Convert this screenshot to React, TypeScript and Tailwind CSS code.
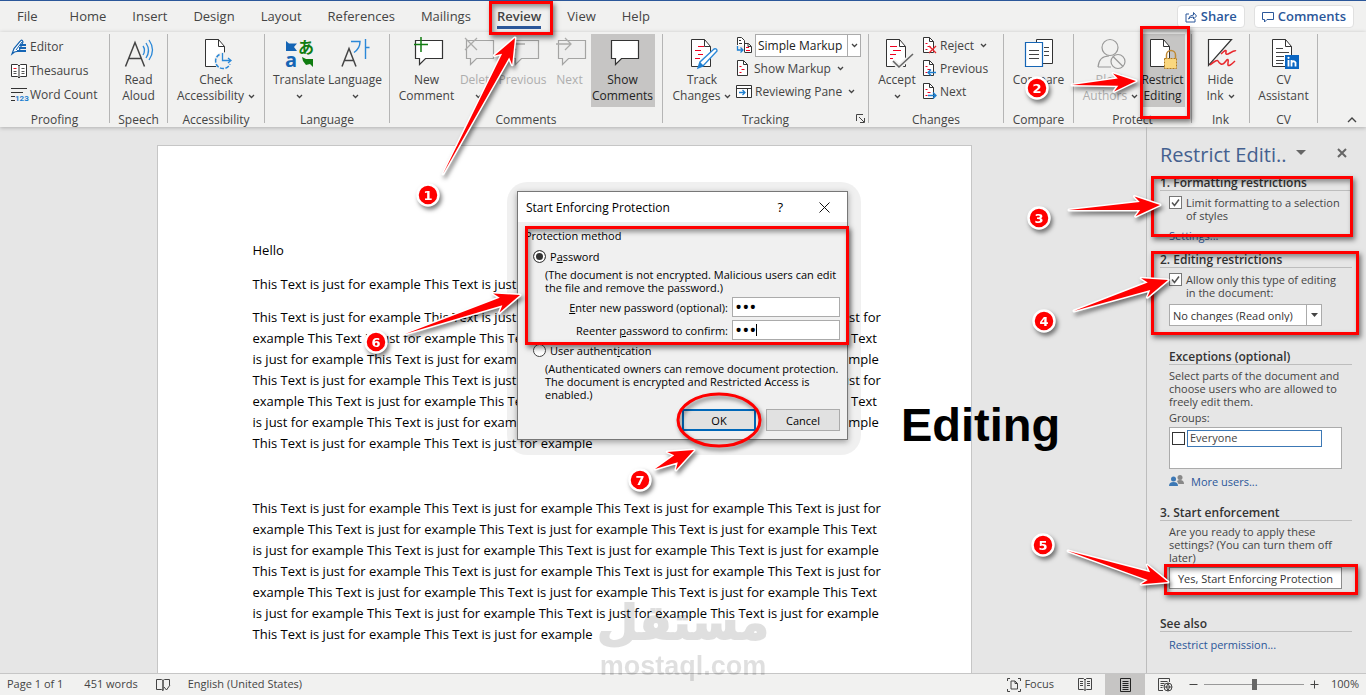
import { useId } from 'react';
import type { ReactNode } from 'react';

const sentence = 'This Text is just for example ';

const tabs = ['File', 'Home', 'Insert', 'Design', 'Layout', 'References', 'Mailings', 'Review', 'View', 'Help'];

/* ---------- Icons ---------- */

function Icon({ w, h, className = '', children }: { w: number; h: number; className?: string; children: ReactNode }) {
  return (
    <svg
      width={w}
      height={h}
      viewBox={`0 0 ${w} ${h}`}
      fill="none"
      stroke="#444444"
      className={`shrink-0 overflow-visible ${className}`}
      aria-hidden="true"
    >
      {children}
    </svg>
  );
}

function Chevron({ className = '' }: { className?: string }) {
  return (
    <Icon w={7} h={5} className={className}>
      <path d="M1 1l2.5 2.5L6 1" strokeWidth="1.3" />
    </Icon>
  );
}

function EditorIcon() {
  return (
    <Icon w={16} h={16}>
      <path d="M1 15L3 9.500L9 2.500Q11-.5 12 3L8 12L3.500 13z" fill="#fff" stroke="#0f5fae" strokeWidth="1.200" />
      <path d="M5 11L11 3" stroke="#0f5fae" />
      <path d="M9 6h6M8 9h7M6 12h9" stroke="#1565b5" strokeWidth="2" />
    </Icon>
  );
}

function ThesaurusIcon() {
  return (
    <Icon w={16} h={16}>
      <path d="M.5 1.500h6L8 3l1.500-1.500h6v12h-6L8 15l-1.500-1.500h-6z" fill="#fff" stroke="#333" />
      <path d="M8 3v12" stroke="#333" />
      <path d="M2.500 5.500h3" stroke="#e81123" />
      <path d="M2.500 8.500h3M2.500 10.500h3M10.500 5.500h3M10.500 8.500h3M10.500 10.500h3" stroke="#555" />
    </Icon>
  );
}

function WordCountIcon() {
  return (
    <Icon w={16} h={16}>
      <path d="M0 1.500h16M0 5.500h12M0 9.500h4M0 13.500h4" stroke="#333" />
      <text x="4" y="14" fontSize="8" fontWeight="700" fill="#1e7fd0" stroke="none" className="font-['Roboto',sans-serif]">
        123
      </text>
    </Icon>
  );
}

function ReadAloudIcon() {
  return (
    <Icon w={30} h={30}>
      <path d="M1.500 27.500L11 3.500L20.500 27.500M5 19.500h12" strokeWidth="1.500" />
      <path d="M19 7q3 4 0 9M22 4q5 7.500 0 15M25 1q7 10 0 20" stroke="#2b88d8" strokeWidth="1.300" />
    </Icon>
  );
}

function Page() {
  return (
    <>
      <path d="M1.500.500h13l6 7v20h-19z" fill="#fff" stroke="#333" />
      <path d="M14.500.500v7h6" stroke="#333" />
    </>
  );
}

function AccessibilityIcon() {
  return (
    <Icon w={24} h={32}>
      <Page />
      <circle cx="19" cy="22" r="9" fill="#f1f1f0" stroke="none" />
      <path d="M15.500 15.500A7.500 7.500 0 1 0 26 25" stroke="#2b88d8" strokeWidth="1.500" strokeDasharray="4 1.500" />
      <path d="M18.500 14v7.500h8M24 19l3 2.500L24 24" stroke="#2b88d8" strokeWidth="1.300" />
    </Icon>
  );
}

function TranslateIcon() {
  return (
    <Icon w={30} h={30}>
      <path d="M2 2l3 2.500h8L10 8l3 4H2z" fill="#1565b5" stroke="none" />
      <path d="M18 18l4 2h7v8l-3-3-4 1-3-4z" fill="#107c10" stroke="none" />
      <text x="1" y="28" fontSize="20" fontWeight="700" fill="#1565b5" stroke="none" className="font-['Open_Sans',sans-serif]">
        a
      </text>
      <text x="14" y="14" fontSize="16" fontWeight="700" fill="#107c10" stroke="none" className="font-['Noto_Sans_CJK_JP',sans-serif]">
        あ
      </text>
    </Icon>
  );
}

function LanguageIcon() {
  return (
    <Icon w={30} h={30}>
      <path d="M2 27.500L9 9.500L16 27.500M4.500 21.500h9" strokeWidth="1.500" />
      <path d="M11 2.500h9q0 7-6 11M25.500 0v20M25.500 8.500h4" stroke="#2b88d8" strokeWidth="1.400" />
    </Icon>
  );
}

function Bubble({ kind }: { kind: 'new' | 'delete' | 'previous' | 'next' | 'show' }) {
  const faded = kind === 'delete' || kind === 'previous' || kind === 'next';
  return (
    <Icon w={34} h={30} className={faded ? 'opacity-40' : ''}>
      <path
        d="M5.500 1.500h27v18h-17l-6 6v-6h-4z"
        fill={faded ? '#ececec' : '#fff'}
        stroke="#333"
        strokeWidth="1.200"
      />
      {kind === 'new' && <path d="M11-2v15M4 5.500h14" stroke="#107c10" strokeWidth="1.500" />}
      {kind === 'delete' && <path d="M4-1l12 12M16-1L4 11" strokeWidth="1.300" />}
      {kind === 'previous' && <path d="M4 5h15M10-1L4 5l6 6" strokeWidth="1.300" />}
      {kind === 'next' && <path d="M3 5h15M12-1l6 6-6 6" strokeWidth="1.300" />}
    </Icon>
  );
}

function TrackIcon() {
  return (
    <Icon w={24} h={32}>
      <Page />
      <path d="M8 7.500h6M5 11.500h6M8 15.500h5M5 19.500h5" stroke="#f00020" />
      <path d="M8 29l2-6L24 10q3-1 3 2L13 27z" fill="#fff" stroke="#2b88d8" strokeWidth="1.400" />
      <path d="M8 29l2-6 4 4z" fill="#1e7fd0" stroke="none" />
    </Icon>
  );
}

function AcceptIcon() {
  return (
    <Icon w={24} h={32}>
      <Page />
      <path d="M5 7.500h7M8 11.500h8M5 15.500h6M5 19.500h3" stroke="#f00020" />
      <path d="M8 22l6 6L28 15" stroke="#f1f1f0" strokeWidth="5" />
      <path d="M8 22l6 6L28 15" stroke="#666" strokeWidth="1.600" />
    </Icon>
  );
}

function SmallPage({ kind }: { kind: 'reject' | 'previous' | 'next' | 'markup' }) {
  return (
    <Icon w={15} h={17}>
      <path d="M1.500.5h6l4 4v11h-10z" fill="#fff" stroke="#333" />
      <path d="M7.500.5v4h4" stroke="#333" />
      <path d="M3.500 6.500h2M5.500 9.500h3M3.500 12.500h2" stroke="#f00020" />
      {kind === 'reject' && <path d="M7 9l7 7M14 9l-7 7" stroke="#e8272c" strokeWidth="1.300" />}
      {kind === 'previous' && <path d="M6 12.500h8M9 9.500l-3 3 3 3" stroke="#1e7fd0" strokeWidth="1.400" />}
      {kind === 'next' && <path d="M6 12.500h8M11 9.500l3 3-3 3" stroke="#1e7fd0" strokeWidth="1.400" />}
    </Icon>
  );
}

function MarkupModeIcon() {
  return (
    <Icon w={17} h={17}>
      <path d="M1.500 8V.5h4l3 3V9M8.500 15V6.500h4l3 3v6h-7M12 6.500v3h3" fill="#fff" stroke="#333" />
      <path d="M3 3.500h2M3 6.500h3" stroke="#333" />
      <path d="M10 10.500h3M10 13.500h4" stroke="#f00020" />
      <path d="M1.500 9v4H7M4.500 10.500L7 13l-2.500 2.500" stroke="#1e7fd0" strokeWidth="1.300" />
    </Icon>
  );
}

function PaneIcon() {
  return (
    <Icon w={16} h={15}>
      <path d="M.5 1.500h15v12H.5zM.5 4.500h15M11.500 4.500v9" fill="#fff" stroke="#333" />
      <path d="M3 8.500h6M6.500 6l2.500 2.500L6.500 11" stroke="#1e7fd0" strokeWidth="1.300" />
    </Icon>
  );
}

function CompareIcon() {
  return (
    <Icon w={30} h={30}>
      <path d="M12.500.500h16v24h-16z" fill="#fff" stroke="#333" />
      <path d="M20 8.500h5M20 12.500h5M20 16.500h5" />
      <path d="M1.500 3.500h17v24h-17z" fill="#fff" stroke="#1565b5" strokeWidth="1.200" />
      <path d="M5 11.500h10M5 15.500h10M5 19.500h10" />
    </Icon>
  );
}

function BlockAuthorsIcon() {
  return (
    <Icon w={30} h={32} className="opacity-50">
      <circle cx="14" cy="8.500" r="8" strokeWidth="1.200" />
      <path d="M2 28Q3 17 13 17M2 28h13" strokeWidth="1.200" />
      <circle cx="22" cy="22.500" r="7" strokeWidth="1.200" />
      <path d="M17 17.500l10 10" strokeWidth="1.200" />
    </Icon>
  );
}

function RestrictIcon() {
  return (
    <Icon w={28} h={32}>
      <Page />
      <path d="M17.500 20v-4a4.500 4.500 0 0 1 9 0v4" stroke="#c08a34" strokeWidth="1.500" />
      <rect x="15.500" y="19.500" width="12" height="10" fill="#fbd77e" stroke="#b47c1e" strokeDasharray="2 1" />
    </Icon>
  );
}

function InkIcon() {
  return (
    <Icon w={28} h={32}>
      <path d="M1.500.500h23l-23 26z" fill="#fff" stroke="#333" strokeWidth="1.200" />
      <path d="M14 15q6-6 5-2t4 1 6-2M3 26q7-6 8-4t3 3 5-3 2 2 7-2" stroke="#e8272c" strokeWidth="1.500" />
    </Icon>
  );
}

function CvIcon() {
  return (
    <Icon w={26} h={32}>
      <Page />
      <path d="M5 9.500h7M5 13.500h13M5 17.500h8M5 21.500h8M5 24.500h7" />
      <rect x="14" y="16" width="14" height="14" fill="#0a66c2" stroke="none" />
      <path d="M17.500 21v6.500M20.500 21v6.500M20.500 23.500q2-2.500 4 0v4" stroke="#fff" strokeWidth="1.800" />
      <circle cx="17.500" cy="18.800" r="1.100" fill="#fff" stroke="none" />
    </Icon>
  );
}

/* ---------- Ribbon ---------- */

type BigButtonProps = {
  icon: ReactNode;
  top: string;
  bottom?: string;
  arrow?: boolean;
  disabled?: boolean;
  pressed?: boolean;
  width: string;
};

function BigButton({ icon, top, bottom, arrow, disabled, pressed, width }: BigButtonProps) {
  return (
    <button
      type="button"
      disabled={disabled}
      className={`flex h-[73px] shrink-0 flex-col items-center pt-[5px] leading-4 whitespace-nowrap ${width} ${
        pressed ? 'bg-[#c6c5c4] text-[#222]' : disabled ? 'text-[#adadad]' : ''
      }`}
    >
      <span className="flex h-[33px] items-start">{icon}</span>
      <span>{top}</span>
      <span className="flex h-4 items-center gap-1">
        {bottom}
        {arrow && <Chevron />}
      </span>
    </button>
  );
}

function SmallButton({ icon, arrow, children }: { icon: ReactNode; arrow?: boolean; children: ReactNode }) {
  return (
    <button type="button" className="flex h-[23px] items-center gap-[3px] whitespace-nowrap">
      {icon}
      {children}
      {arrow && <Chevron className="ml-[3px]" />}
    </button>
  );
}

function Group({ name, width, children, corner }: { name: string; width: string; children: ReactNode; corner?: ReactNode }) {
  return (
    <section aria-label={name} className={`relative flex h-[89px] shrink-0 flex-col border-r border-[#b5b5b5] ${width}`}>
      <div className="flex h-[73px] justify-center">{children}</div>
      <p className="pt-1 text-center leading-[18px]">{name}</p>
      {corner}
    </section>
  );
}

function Ribbon() {
  return (
    <div className="relative z-10 flex bg-[#f1f1f0] pt-[2px] pb-1 text-[12px] text-[#444] shadow-[0_1px_4px_#b0b0b0]">
      <Group name="Proofing" width="w-[110px]">
        <div className="flex w-full flex-col pt-px pl-[11px]">
          <button type="button" className="flex h-6 items-center gap-[3px]"><EditorIcon />Editor</button>
          <button type="button" className="flex h-6 items-center gap-[3px]"><ThesaurusIcon />Thesaurus</button>
          <button type="button" className="flex h-6 items-center gap-[3px] whitespace-nowrap"><WordCountIcon />Word Count</button>
        </div>
      </Group>
      <Group name="Speech" width="w-[58px]">
        <BigButton icon={<ReadAloudIcon />} top="Read" bottom="Aloud" width="w-[50px]" />
      </Group>
      <Group name="Accessibility" width="w-[97px]">
        <BigButton icon={<AccessibilityIcon />} top="Check" bottom="Accessibility" arrow width="w-[90px]" />
      </Group>
      <Group name="Language" width="w-[125px]">
        <BigButton icon={<TranslateIcon />} top="Translate" arrow width="w-[56px]" />
        <BigButton icon={<LanguageIcon />} top="Language" arrow width="w-[56px]" />
      </Group>
      <Group name="Comments" width="w-[273px]">
        <div className="flex pr-1">
          <BigButton icon={<Bubble kind="new" />} top="New" bottom="Comment" width="w-[66px]" />
          <BigButton icon={<Bubble kind="delete" />} top="Delete" arrow disabled width="w-[37px]" />
          <BigButton icon={<Bubble kind="previous" />} top="Previous" disabled width="w-[52px]" />
          <BigButton icon={<Bubble kind="next" />} top="Next" disabled width="w-[42px]" />
          <BigButton icon={<Bubble kind="show" />} top="Show" bottom="Comments" pressed width="w-[64px]" />
        </div>
      </Group>
      <Group
        name="Tracking"
        width="w-[206px]"
        corner={
          <Icon w={9} h={9} className="absolute right-[3px] bottom-0">
            <path d="M.5 7V.5H7M3 3l5 5M8.500 4v4.500H4" />
          </Icon>
        }
      >
        <BigButton icon={<TrackIcon />} top="Track" bottom="Changes" arrow width="w-[64px]" />
        <div className="ml-[2px] flex flex-col">
          <div className="flex h-[23px] items-center gap-[2px]">
            <MarkupModeIcon />
            <div className="relative flex">
              <select aria-label="Display for review" className="h-[23px] w-[106px] appearance-none border border-[#ababab] bg-white pl-[2px] text-[#222]">
                <option>Simple Markup</option>
              </select>
              <span className="pointer-events-none absolute inset-y-0 right-0 flex w-[14px] items-center justify-center border-l border-[#ababab]">
                <Chevron />
              </span>
            </div>
          </div>
          <SmallButton icon={<SmallPage kind="markup" />} arrow>Show Markup</SmallButton>
          <SmallButton icon={<PaneIcon />} arrow>Reviewing Pane</SmallButton>
        </div>
      </Group>
      <Group name="Changes" width="w-[135px]">
        <div className="flex pr-1">
          <BigButton icon={<AcceptIcon />} top="Accept" arrow width="w-[50px]" />
          <div className="flex w-[74px] flex-col">
            <SmallButton icon={<SmallPage kind="reject" />} arrow>Reject</SmallButton>
            <SmallButton icon={<SmallPage kind="previous" />}>Previous</SmallButton>
            <SmallButton icon={<SmallPage kind="next" />}>Next</SmallButton>
          </div>
        </div>
      </Group>
      <Group name="Compare" width="w-[70px]">
        <BigButton icon={<CompareIcon />} top="Compare" width="w-[60px]" />
      </Group>
      <Group name="Protect" width="w-[118px]">
        <BigButton icon={<BlockAuthorsIcon />} top="Block" bottom="Authors" arrow disabled width="w-[60px]" />
        <BigButton icon={<RestrictIcon />} top="Restrict" bottom="Editing" pressed width="w-[44px]" />
      </Group>
      <Group name="Ink" width="w-[58px]">
        <BigButton icon={<InkIcon />} top="Hide" bottom="Ink" arrow width="w-[50px]" />
      </Group>
      <Group name="CV" width="w-[68px]">
        <BigButton icon={<CvIcon />} top="CV" bottom="Assistant" width="w-[60px]" />
      </Group>
      <button type="button" aria-label="Collapse the ribbon" className="mt-auto mr-[9px] mb-0 ml-auto">
        <Icon w={10} h={7}>
          <path d="M1 6l4-4 4 4" strokeWidth="1.400" />
        </Icon>
      </button>
    </div>
  );
}

function TabBar() {
  return (
    <header className="flex h-8 shrink-0 items-center border-t border-[#2b579a] bg-[#f1f1f0] pl-[17px] text-[13px] text-[#444]">
      <nav className="flex gap-[26px] self-start pt-[5px]">
        {tabs.map((tab) => (
          <a
            key={tab}
            href={`#${tab.toLowerCase()}`}
            className={`leading-5 first:mr-[6px] ${tab === 'Review' ? 'border-b-3 border-[#2b579a] font-semibold' : ''}`}
          >
            {tab}
          </a>
        ))}
      </nav>
      <div className="mr-3 ml-auto flex gap-[9px] text-[13px] font-semibold text-[#2b579a]">
        <button type="button" className="flex h-[23px] items-center gap-1 rounded-sm border border-[#e0e0e0] bg-white px-[7px]">
          <Icon w={12} h={12}>
            <path d="M4 3H1v8h9V8M3.500 8q1-4 5-4V1.500L11.500 5 8.500 8V6Q5 6 3.500 8z" stroke="#2b579a" />
          </Icon>
          Share
        </button>
        <button type="button" className="flex h-[23px] items-center gap-1 rounded-sm border border-[#e0e0e0] bg-white px-[7px]">
          <Icon w={12} h={12}>
            <path d="M.5 1.500h11v7H5l-2.500 2.500V8.500h-2z" stroke="#2b579a" />
          </Icon>
          Comments
        </button>
      </div>
    </header>
  );
}

/* ---------- Document ---------- */

function Document() {
  return (
    <main className="relative min-w-0 flex-1 overflow-hidden pt-[18px] pr-[18px]">
      <article className="mx-auto h-full w-[815px] border border-b-0 border-[#c6c6c6] bg-white pt-[94px] pr-[82px] pl-[95px] text-[13px] leading-[21px] text-black">
        <p>Hello</p>
        <p className="mt-[13px]">{sentence.repeat(3)}</p>
        <p className="mt-3">{sentence.repeat(24)}</p>
        <p className="mt-11">{sentence.repeat(24)}</p>
      </article>
    </main>
  );
}

/* ---------- Restrict Editing pane ---------- */

function Tick({ label }: { label: string }) {
  const id = useId();
  return (
    <div className="flex gap-1 pr-[7px] pl-[9px]">
      <span className="relative h-[13px] w-[13px] shrink-0">
        <input id={id} type="checkbox" defaultChecked className="block h-[13px] w-[13px] appearance-none border border-[#777] bg-white" />
        <svg viewBox="0 0 13 13" fill="none" stroke="#555" strokeWidth="1.500" className="pointer-events-none absolute inset-0" aria-hidden="true">
          <path d="M3 6.500l2.500 3L10 3.500" />
        </svg>
      </span>
      <label htmlFor={id}>{label}</label>
    </div>
  );
}

function PaneHeading({ children }: { children: ReactNode }) {
  return <h3 className="border-b border-[#bdbdbd] text-[12px] leading-[14px] font-semibold text-[#333]">{children}</h3>;
}

function RestrictPane() {
  return (
    <aside className="w-[220px] shrink-0 border-l border-[#bdbdbd] pt-[14px] pr-[14px] pl-[13px] text-[11px] leading-[13px] text-[#444]">
      <div className="flex items-center text-[#44608f]">
        <h2 className="text-[20px] leading-[27px] whitespace-nowrap">Restrict Editi..</h2>
        <Icon w={10} h={6} className="mb-1 ml-[10px]">
          <path d="M0 0h10L5 5z" fill="#666" stroke="none" />
        </Icon>
        <button type="button" aria-label="Close pane" className="mr-[5px] mb-1 ml-auto">
          <Icon w={10} h={10}>
            <path d="M1 1l8 8M9 1L1 9" stroke="#666" strokeWidth="2" />
          </Icon>
        </button>
      </div>

      <div className="mt-2">
        <PaneHeading>1. Formatting restrictions</PaneHeading>
      </div>
      <div className="mt-[5px]">
        <Tick label="Limit formatting to a selection of styles" />
      </div>
      <a href="#settings" className="mt-[7px] ml-[9px] block text-[#2b579a]">Settings...</a>

      <div className="mt-[11px]">
        <PaneHeading>2. Editing restrictions</PaneHeading>
      </div>
      <div className="mt-[5px]">
        <Tick label="Allow only this type of editing in the document:" />
      </div>
      <div className="relative mt-[5px] ml-[9px] w-[153px]">
        <select aria-label="Editing type" className="block h-[22px] w-full appearance-none border border-[#ababab] bg-white pl-[3px] text-[#333]">
          <option>No changes (Read only)</option>
        </select>
        <span className="pointer-events-none absolute inset-y-0 right-0 flex w-4 items-center justify-center border-l border-[#ababab]">
          <Icon w={7} h={4}>
            <path d="M0 0h7L3.500 4z" fill="#444" stroke="none" />
          </Icon>
        </span>
      </div>

      <div className="mt-6 ml-[9px]">
        <PaneHeading>Exceptions (optional)</PaneHeading>
        <p className="mt-1">Select parts of the document and choose users who are allowed to freely edit them.</p>
        <p className="mt-[3px]">Groups:</p>
        <div className="mt-[3px] mr-[10px] flex h-[42px] items-start gap-[2px] border border-[#ababab] bg-white pt-[2px] pl-[2px]">
          <input id="everyone" type="checkbox" className="mt-[2px] h-[13px] w-[13px] appearance-none border border-[#333] bg-white" />
          <label htmlFor="everyone" className="h-[17px] w-[135px] border border-[#3c78b5] pl-[2px] leading-[14px]">Everyone</label>
        </div>
        <a href="#users" className="mt-[5px] flex items-center gap-[7px] text-[#2b579a]">
          <Icon w={15} h={14}>
            <circle cx="4.500" cy="5" r="2.500" fill="#3c78b5" stroke="none" />
            <path d="M0 12q0-4 4.500-4T9 12z" fill="#3c78b5" stroke="none" />
            <circle cx="11" cy="3.500" r="2.500" fill="#888" stroke="none" />
            <path d="M8 7q1-1 3-1 4 0 4 4H9.500z" fill="#888" stroke="none" />
          </Icon>
          More users...
        </a>
      </div>

      <div className="mt-[18px]">
        <PaneHeading>3. Start enforcement</PaneHeading>
      </div>
      <p className="mt-1 ml-[9px]">Are you ready to apply these settings? (You can turn them off later)</p>
      <button type="button" className="mt-[3px] ml-[9px] block h-[22px] w-[173px] border border-[#8c8c8c] bg-white text-[#333]">
        Yes, Start Enforcing Protection
      </button>

      <div className="mt-7">
        <PaneHeading>See also</PaneHeading>
      </div>
      <a href="#permission" className="mt-[6px] ml-[9px] block text-[#2b579a]">Restrict permission...</a>
    </aside>
  );
}

/* ---------- Dialog ---------- */

function ProtectionDialog() {
  return (
    <div className="absolute top-[182px] left-[507px] z-20 w-[354px] rounded-[20px] bg-black/6 pt-[9px] pr-[13px] pb-[15px] pl-[10px]">
      <div role="dialog" aria-label="Start Enforcing Protection" className="border border-[#777] bg-[#f0f0f0] text-[11px] leading-[13px] text-black shadow-[0_2px_6px_rgba(0,0,0,0.35)]">
        <div className="flex h-[30px] items-center bg-white pr-[17px] pl-2 text-[12px]">
          <h2>Start Enforcing Protection</h2>
          <button type="button" aria-label="Help" className="ml-auto text-[13px]">?</button>
          <button type="button" aria-label="Close" className="ml-9">
            <Icon w={11} h={11}>
              <path d="M.5.5l10 10M10.500.5l-10 10" stroke="#111" />
            </Icon>
          </button>
        </div>
        <div className="px-[7px] pt-[7px] pb-2">
          <fieldset>
            <legend>Protection method</legend>
            <div className="mt-2 flex items-center gap-1 pl-2">
              <input id="by-password" type="radio" name="method" defaultChecked className="h-[13px] w-[13px] appearance-none rounded-full border border-[#444] bg-white checked:bg-[#333] checked:shadow-[inset_0_0_0_2px_white]" />
              <label htmlFor="by-password">P<u>a</u>ssword</label>
            </div>
            <p className="mt-[5px] pl-5">(The document is not encrypted. Malicious users can edit the file and remove the password.)</p>
            <div className="mt-[3px] flex items-center justify-end gap-1">
              <label htmlFor="new-password"><u>E</u>nter new password (optional):</label>
              <input id="new-password" type="password" defaultValue="abc" className="h-5 w-[108px] border border-[#ababab] bg-white px-[2px] text-[19px]" />
            </div>
            <div className="relative mt-[3px] flex items-center justify-end gap-1">
              <label htmlFor="confirm-password">Reenter <u>p</u>assword to confirm:</label>
              <input id="confirm-password" type="password" defaultValue="abc" className="h-5 w-[108px] border border-[#ababab] bg-white px-[2px] text-[19px]" />
              <span className="absolute top-1 right-[83px] h-3 w-px bg-black"></span>
            </div>
            <div className="mt-1 flex items-center gap-1 pl-2">
              <input id="by-user" type="radio" name="method" className="h-[13px] w-[13px] appearance-none rounded-full border border-[#444] bg-white" />
              <label htmlFor="by-user">User authent<u>i</u>cation</label>
            </div>
            <p className="mt-[5px] pl-5">
              (Authenticated owners can remove document protection. The document is encrypted and Restricted Access is enabled.)
            </p>
          </fieldset>
          <div className="mt-2 flex justify-end gap-[10px]">
            <button type="button" className="h-[22px] w-[74px] border-2 border-[#0067b8] bg-[#e1e1e1]">OK</button>
            <button type="button" className="h-[22px] w-[74px] border border-[#ababab] bg-[#e1e1e1]">Cancel</button>
          </div>
        </div>
      </div>
    </div>
  );
}

/* ---------- Callouts drawn over the window ---------- */

type Arrow = { from: [number, number]; to: [number, number]; head?: number };

const arrows: Arrow[] = [
  { from: [443, 174], to: [515, 38] },
  { from: [1072, 85], to: [1136, 81], head: 9 },
  { from: [1069, 210], to: [1160, 205] },
  { from: [1074, 311], to: [1168, 280] },
  { from: [1068, 551], to: [1168, 582] },
  { from: [405, 334], to: [520, 295] },
  { from: [655, 469], to: [694, 450] },
];

const badges: [number, number][] = [
  [428, 195],
  [1037, 88],
  [1039, 218],
  [1044, 321],
  [1043, 545],
  [376, 342],
  [640, 480],
];

function arrowPoints({ from, to, head = 10 }: Arrow) {
  const dx = to[0] - from[0];
  const dy = to[1] - from[1];
  const length = Math.hypot(dx, dy);
  const ux = dx / length;
  const uy = dy / length;
  // back = distance behind the tip, side = distance off the shaft
  const at = (back: number, side: number) => `${to[0] - ux * back - uy * side},${to[1] - uy * back + ux * side}`;
  return [
    `${from[0]},${from[1]}`,
    at(head * 2, head * 0.4),
    at(head * 2.5, head),
    at(0, 0),
    at(head * 2.5, -head),
    at(head * 2, -head * 0.4),
  ].join(' ');
}

const frame = 'absolute border-[#f00] shadow-[2px_3px_5px_rgba(0,0,0,0.5),inset_2px_3px_5px_rgba(0,0,0,0.4)]';

function Callouts() {
  return (
    <div className="pointer-events-none absolute inset-0 z-30">
      <div className={`${frame} top-[1px] left-[489px] h-[34px] w-[64px] border-3`}></div>
      <div className={`${frame} top-[26px] left-[1140px] h-[93px] w-[50px] border-3`}></div>
      <div className={`${frame} top-[176px] left-[1151px] h-[61px] w-[202px] border-3`}></div>
      <div className={`${frame} top-[251px] left-[1151px] h-[84px] w-[208px] border-3`}></div>
      <div className={`${frame} top-[564px] left-[1164px] h-[31px] w-[194px] border-3`}></div>
      <div className={`${frame} top-[226px] left-[525px] h-[119px] w-[324px] border-3`}></div>
      <svg width="1366" height="695" viewBox="0 0 1366 695" className="absolute top-0 left-0 drop-shadow-[2px_3px_2px_rgba(0,0,0,0.5)]" aria-hidden="true">
        <ellipse cx="719" cy="420" rx="41" ry="26" fill="none" stroke="#f00" strokeWidth="3" />
        {arrows.map((arrow) => (
          <polygon
            key={arrow.from.join()}
            points={arrowPoints(arrow)}
            fill="#f00"
            stroke="#fff"
            strokeWidth="3"
            strokeLinejoin="round"
            paintOrder="stroke"
          />
        ))}
        {badges.map(([x, y], i) => (
          <g key={i}>
            <circle cx={x} cy={y} r="10.500" fill="#f00" stroke="#fff" strokeWidth="2.500" />
            <text x={x} y={y + 5} textAnchor="middle" fontSize="13" fontWeight="700" fill="#fff" className="font-['DejaVu_Sans',sans-serif]">
              {i + 1}
            </text>
          </g>
        ))}
      </svg>
      <p className="absolute top-[398px] left-[901px] font-['Liberation_Sans',sans-serif] text-[47px] leading-[54px] font-bold text-black">Editing</p>
      <div className="absolute top-[594px] left-[600px] flex w-[166px] flex-col items-center font-bold text-black opacity-12">
        <span lang="ar" className="font-['DejaVu_Sans',sans-serif] text-[47px] leading-[58px] [-webkit-text-stroke:2px_#000]">مستقل</span>
        <span className="font-['Liberation_Sans',sans-serif] text-[27px] leading-[28px]">mostaql.com</span>
      </div>
    </div>
  );
}

/* ---------- Status bar ---------- */

function StatusBar() {
  return (
    <footer className="flex h-[22px] shrink-0 items-center border-t border-[#c6c6c6] bg-[#f1f1f0] pr-[7px] pl-[7px] text-[11px] text-[#444]">
      <span>Page 1 of 1</span>
      <span className="ml-[21px]">451 words</span>
      <Icon w={15} h={14} className="ml-[18px]">
        <path d="M7 2.500L5.500 1.500h-5v10h5L7 12.500zM7 2.500l1.500-1h5V7M7 12.500V2.500M8 9l2.500 3L14 7" />
      </Icon>
      <span className="ml-[17px]">English (United States)</span>
      <button type="button" className="ml-auto flex items-center gap-[3px]">
        <Icon w={14} h={14}>
          <path d="M3 .5H.5V3M11 .5h2.500V3M.5 11v2.500H3M13.500 11v2.500H11M4 3h4l2.500 2.500V11H4zM8 3v2.500h2.500" />
        </Icon>
        Focus
      </button>
      <button type="button" aria-label="Read mode" className="ml-[11px] flex h-full w-10 items-center justify-center">
        <Icon w={14} h={13}>
          <path d="M7 2L5.500.5h-5v11h5L7 12.500l1.500-1h5V.5h-5zM7 2v10M2 3.500h3M2 5.500h3M2 7.500h3M9 3.500h3M9 5.500h3M9 7.500h3" />
        </Icon>
      </button>
      <button type="button" aria-label="Print layout" className="flex h-full w-10 items-center justify-center bg-[#c6c5c4]">
        <Icon w={11} h={14}>
          <path d="M.5.5h10v13H.5zM2.500 3.500h6M2.500 5.500h6M2.500 7.500h6M2.500 9.500h6M2.500 11.500h6" stroke="#222" />
        </Icon>
      </button>
      <button type="button" aria-label="Web layout" className="flex h-full w-10 items-center justify-center">
        <Icon w={15} h={14}>
          <path d="M5 12.500H.5V.5h11V4M2.500 3.500h7M2.500 5.500h4M2.500 7.500h3M2.500 9.500h2" />
          <circle cx="10" cy="9" r="4" />
          <path d="M6 9h8M10 5q-3 4 0 8M10 5q3 4 0 8" />
        </Icon>
      </button>
      <button type="button" aria-label="Zoom out" className="ml-1 flex h-full items-center">
        <Icon w={9} h={9}><path d="M.5 4.500h8" /></Icon>
      </button>
      <input
        type="range"
        aria-label="Zoom"
        className="mx-[6px] h-3 w-[100px] appearance-none bg-transparent [&::-webkit-slider-runnable-track]:h-px [&::-webkit-slider-runnable-track]:bg-[#999] [&::-webkit-slider-thumb]:-mt-[5px] [&::-webkit-slider-thumb]:h-[11px] [&::-webkit-slider-thumb]:w-[5px] [&::-webkit-slider-thumb]:appearance-none [&::-webkit-slider-thumb]:bg-[#666]"
      />
      <button type="button" aria-label="Zoom in" className="flex h-full items-center">
        <Icon w={9} h={9}><path d="M.5 4.500h8M4.500.5v8" /></Icon>
      </button>
      <span className="ml-3 w-7 text-right">100%</span>
    </footer>
  );
}

export default function App() {
  return (
    <div className="relative flex h-screen flex-col overflow-hidden bg-[#e6e6e6] font-['Open_Sans',sans-serif]">
      <TabBar />
      <Ribbon />
      <div className="flex min-h-0 flex-1">
        <Document />
        <RestrictPane />
      </div>
      <StatusBar />
      <ProtectionDialog />
      <Callouts />
    </div>
  );
}
